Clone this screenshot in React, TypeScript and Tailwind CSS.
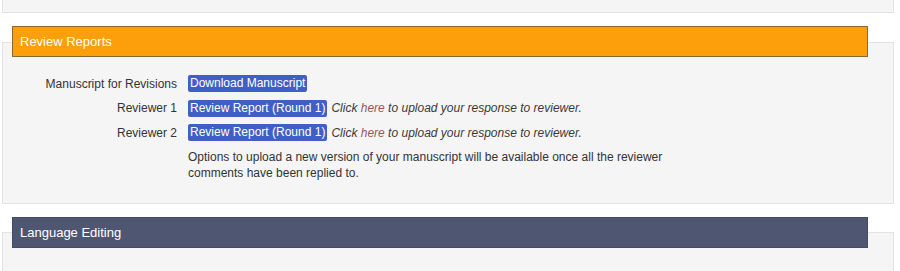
const font = { fontFamily: '"Liberation Sans", Arial, sans-serif' };

function Row({ label, children }: { label: string; children: React.ReactNode }) {
  return (
    <div className="flex h-[17px] items-center">
      <div className="w-[174px] text-right text-[#333333]">{label}</div>
      <div className="ml-[11px] flex items-center">{children}</div>
    </div>
  );
}

function Btn({ children }: { children: React.ReactNode }) {
  return (
    <span className="inline-block h-[17px] rounded-[2px] bg-[#3f5fc6] px-[2px] leading-[17px] text-white">
      {children}
    </span>
  );
}

function Upload() {
  return (
    <span className="ml-[4px] italic text-[#3a3a3a]">
      Click <span className="text-[#9a5656]">here</span> to upload your response to reviewer.
    </span>
  );
}

export default function App() {
  return (
    <div className="h-[271px] w-[900px] overflow-hidden bg-white text-[12px]" style={font}>
      <div className="ml-[2px] h-[13px] w-[892px] border border-t-0 border-[#e3e3e3] bg-[#f5f5f5]" />

      <section className="mt-[13px]">
        <div className="relative z-10 ml-[12px] flex h-[31px] w-[856px] items-center border border-[#8a6a2c] bg-[#fd9e0b] px-[7px] text-[13px] text-white">
          Review Reports
        </div>
        <div className="-mt-[15px] ml-[2px] w-[892px] border border-[#e3e3e3] bg-[#f5f5f5] pb-[22px] pt-[32px]">
          <div className="flex flex-col gap-[7.5px]">
            <Row label="Manuscript for Revisions">
              <Btn>Download Manuscript</Btn>
            </Row>
            <Row label="Reviewer 1">
              <Btn>Review Report (Round 1)</Btn>
              <Upload />
            </Row>
            <Row label="Reviewer 2">
              <Btn>Review Report (Round 1)</Btn>
              <Upload />
            </Row>
          </div>
          <p className="ml-[185px] mt-[8px] w-[500px] leading-[16px] text-[#333333]">
            Options to upload a new version of your manuscript will be available once all the reviewer
            comments have been replied to.
          </p>
        </div>
      </section>

      <section className="mt-[13px]">
        <div className="relative z-10 ml-[12px] flex h-[31px] w-[856px] items-center border border-[#454b63] bg-[#4f5671] px-[7px] text-[13px] text-white">
          Language Editing
        </div>
        <div className="-mt-[16px] ml-[2px] h-[60px] w-[892px] border border-[#e3e3e3] bg-[#f5f5f5]" />
      </section>
    </div>
  );
}
